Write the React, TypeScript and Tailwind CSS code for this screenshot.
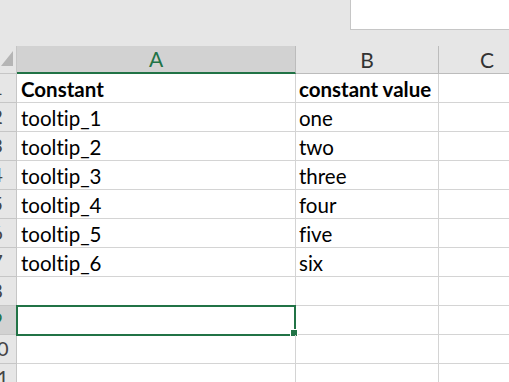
const rows: [string, string][] = [
  ['Constant', 'constant value'],
  ['tooltip_1', 'one'],
  ['tooltip_2', 'two'],
  ['tooltip_3', 'three'],
  ['tooltip_4', 'four'],
  ['tooltip_5', 'five'],
  ['tooltip_6', 'six'],
  ['', ''],
  ['', ''],
  ['', ''],
  ['', ''],
];

const font = { fontFamily: 'Lato, "Noto Sans", sans-serif' };

function RowHeader({ n, selected }: { n: number; selected: boolean }) {
  return (
    <div
      className={`w-[17px] shrink-0 overflow-hidden border-r border-b border-[#c6c6c6] flex items-end pb-[5px] ${
        selected ? 'bg-[#d2d2d2] text-[#217346]' : 'bg-[#e6e6e6] text-[#444444]'
      }`}
    >
      <div className="w-[38px] ml-[-22px] shrink-0 text-center text-[20px] leading-none">{n}</div>
    </div>
  );
}

export default function App() {
  return (
    <div
      className="w-[509px] h-[382px] overflow-hidden bg-white flex flex-col [font-variant-ligatures:none]"
      style={font}
    >
      <div className="h-[46px] shrink-0 bg-[#e6e6e6] flex justify-end">
        <div className="w-[159px] h-[30px] bg-white border-l border-b border-[#c6c6c6]" />
      </div>

      {/* column headers */}
      <div className="h-[28px] shrink-0 flex bg-[#e6e6e6]">
        <div className="w-[17px] shrink-0 border-r border-b border-[#c6c6c6] flex items-end justify-end">
          <svg width="16" height="27" viewBox="0 0 16 27" className="block">
            <polygon points="1,20 13,5 13,20" fill="#b5b5b5" />
          </svg>
        </div>
        <div className="w-[279px] shrink-0 bg-[#d2d2d2] border-r border-[#bcbcbc] border-b-2 border-b-[#217346] flex items-center justify-center text-[21px] text-[#217346]">
          A
        </div>
        <div className="w-[143px] shrink-0 border-r border-[#bcbcbc] border-b border-b-[#bcbcbc] flex items-center justify-center text-[21px] text-[#333333]">
          B
        </div>
        <div className="w-[96px] shrink-0 border-b border-[#bcbcbc] flex items-center justify-center text-[21px] text-[#333333]">
          C
        </div>
      </div>

      {rows.map(([a, b], i) => {
        const n = i + 1;
        const selected = n === 9;
        const bold = n === 1;
        return (
          <div key={n} className="h-[29px] shrink-0 flex">
            <RowHeader n={n} selected={selected} />
            <div
              className={`relative w-[279px] shrink-0 border-r border-b border-[#d4d4d4] flex items-end pl-[4px] pb-[3px] text-[20.5px] leading-none text-black ${
                bold ? 'font-bold' : ''
              }`}
            >
              <span className="whitespace-nowrap">{a}</span>
              {selected && (
                <div className="absolute left-[-1px] top-[-1px] right-[-1px] bottom-[-2px] border-2 border-[#217346]">
                  <div className="absolute right-[-4px] bottom-[-3px] w-[8px] h-[8px] bg-[#217346] border border-white" />
                </div>
              )}
            </div>
            <div
              className={`w-[143px] shrink-0 border-r border-b border-[#d4d4d4] flex items-end pl-[3px] pb-[3px] text-[20.5px] leading-none text-black ${
                bold ? 'font-bold' : ''
              }`}
            >
              <span className="whitespace-nowrap">{b}</span>
            </div>
            <div className="w-[96px] shrink-0 border-b border-[#d4d4d4]" />
          </div>
        );
      })}
    </div>
  );
}
